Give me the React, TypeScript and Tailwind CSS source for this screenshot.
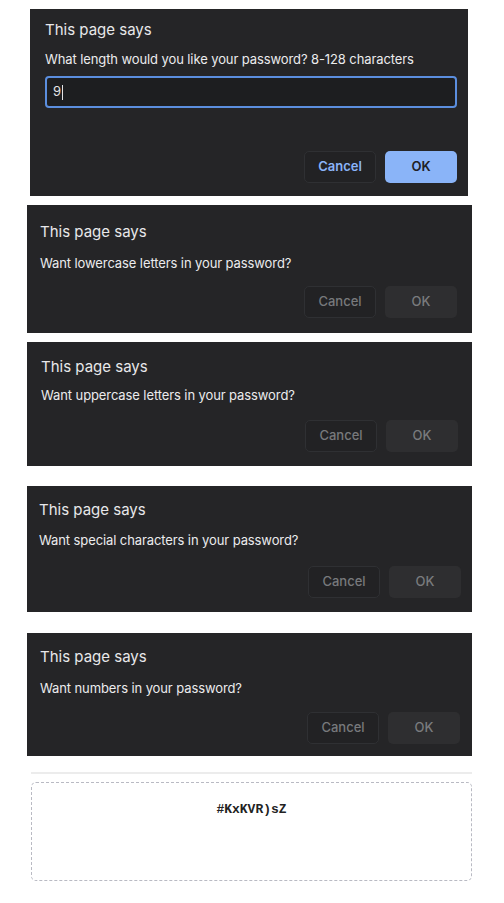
import React from "react";

type DialogProps = {
  message: string;
  box: string;
  title: string;
  msg: string;
  active?: boolean;
  children?: React.ReactNode;
};

function Dialog({ message, box, title, msg, active, children }: DialogProps) {
  return (
    <div className={`flex flex-col bg-[#252527] ${box}`}>
      <div className={`text-[15px] leading-5 text-[#e8e8ea] ${title}`}>This page says</div>
      <div className={`text-[13px] leading-4 tracking-[-0.1px] text-[#ebebed] ${msg}`}>{message}</div>
      {children}
      <div className="mt-auto flex justify-end gap-[9px]">
        <button
          className={`h-[32px] w-[72px] rounded-[5px] border border-[#2f3033] bg-[#222224] text-[13px] ${
            active ? "font-semibold text-[#8ab4f8]" : "font-medium text-[#78797c]"
          }`}
        >
          Cancel
        </button>
        <button
          className={`h-[32px] w-[72px] rounded-[5px] text-[13px] ${
            active ? "bg-[#8ab4f8] font-semibold text-[#202124]" : "bg-[#2e2e30] font-medium text-[#7a7b7e]"
          }`}
        >
          OK
        </button>
      </div>
    </div>
  );
}

export default function App() {
  return (
    <div className="min-h-[903px] bg-white pt-[9px] font-['Inter','Noto_Sans',sans-serif]">
      <Dialog
        message="What length would you like your password? 8-128 characters"
        box="ml-[30px] w-[438px] h-[187px] pl-[15px] pr-[11px] pb-[13px]"
        title="mt-[11px]"
        msg="mt-[11px]"
        active
      >
        <div className="mt-[9px] flex h-[32px] items-center rounded-[4px] border-2 border-[#5b8ede] bg-[#1d1e20] pl-[6px] text-[13px] text-[#e3e3e5]">
          9<span className="ml-px h-[15px] w-px bg-[#e3e3e5]" />
        </div>
      </Dialog>

      <Dialog
        message="Want lowercase letters in your password?"
        box="mt-[9px] ml-[27px] w-[445px] h-[128px] pl-[13px] pr-[15px] pb-[15px]"
        title="mt-[17px]"
        msg="mt-[13px]"
      />

      <Dialog
        message="Want uppercase letters in your password?"
        box="mt-[9px] ml-[27px] w-[445px] h-[124px] pl-[14px] pr-[14px] pb-[14px]"
        title="mt-[15px]"
        msg="mt-[10px]"
      />

      <Dialog
        message="Want special characters in your password?"
        box="mt-[20px] ml-[27px] w-[445px] h-[126px] pl-[12px] pr-[11px] pb-[14px]"
        title="mt-[14px]"
        msg="mt-[12px]"
      />

      <Dialog
        message="Want numbers in your password?"
        box="mt-[21px] ml-[27px] w-[445px] h-[123px] pl-[13px] pr-[12px] pb-[12px]"
        title="mt-[14px]"
        msg="mt-[13px]"
      />

      <div className="mt-[16px] ml-[31px] h-[2px] w-[441px] bg-[#ececec]" />

      <div className="mt-[8px] ml-[31px] h-[99px] w-[441px] rounded-[5px] border border-dashed border-[#b9bac3] pt-[12px] text-center">
        <span className="font-['Liberation_Mono',monospace] text-[13px] font-bold text-[#222]">#KxKVR)sZ</span>
      </div>
    </div>
  );
}
